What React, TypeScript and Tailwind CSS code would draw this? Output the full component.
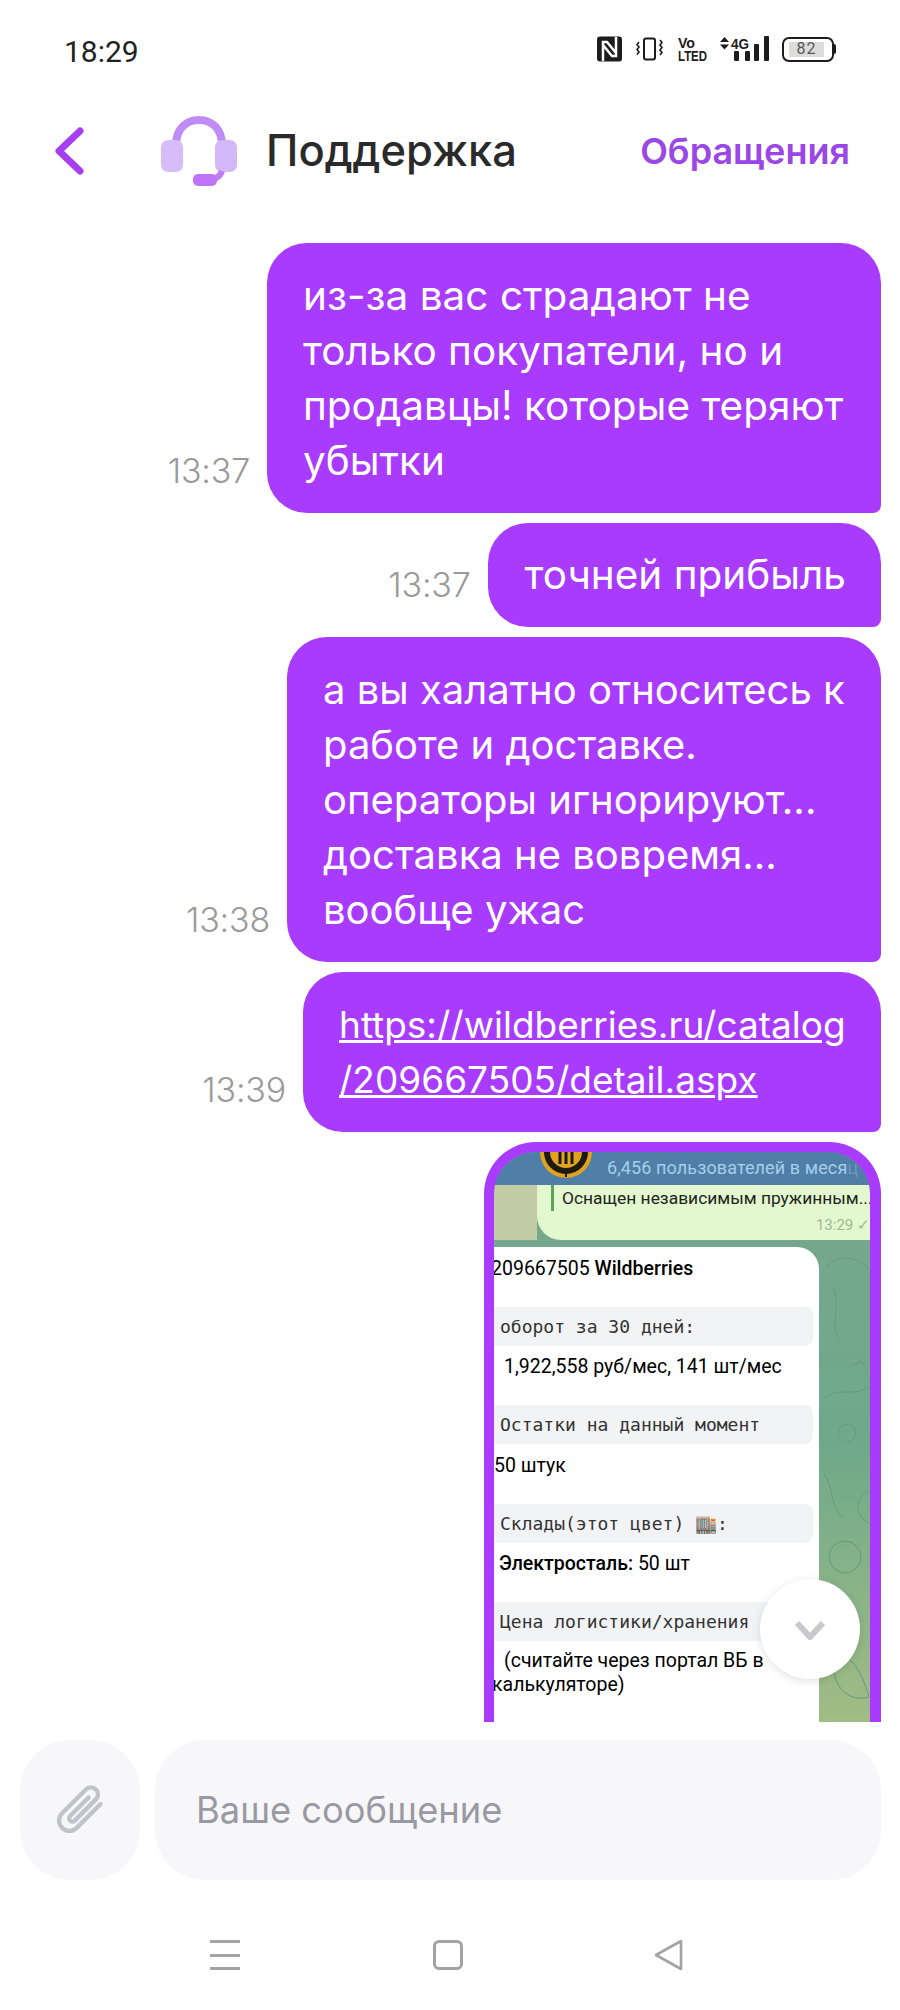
import React from 'react';

const PURPLE = 'bg-[#a83bfd]';

const HeadsetIcon = () => (
  <svg width="78" height="72" viewBox="0 0 78 72" fill="none">
    <path d="M16 30 C16 14 26 5 39 5 C52 5 62 14 62 30" stroke="#bf8cf5" strokeWidth="8" />
    <rect x="1" y="25" width="22" height="32" rx="7" fill="#d6bdf9" />
    <rect x="55" y="25" width="22" height="32" rx="7" fill="#d3b8f9" />
    <path d="M62 56 C60 62 54 65 46 65" stroke="#bf7ef8" strokeWidth="6" />
    <rect x="33" y="59" width="24" height="12" rx="5" fill="#bf74fa" />
  </svg>
);

const StatusIcons = () => (
  <div className="flex items-center">
    {/* nfc */}
    <svg width="25" height="26" viewBox="0 0 25 26">
      <rect width="25" height="25" y="0.5" rx="3" fill="#1c1c1c" />
      <path d="M6 25 V6 H10 L19 17 M19 1 V20 H15 L6 9" stroke="#fff" strokeWidth="2.5" fill="none" />
    </svg>
    {/* vibrate */}
    <svg width="27" height="24" viewBox="0 0 27 24" fill="none" stroke="#1c1c1c" className="ml-[14px]">
      <rect x="8" y="1.5" width="11" height="21" rx="2" strokeWidth="2" />
      <path d="M3 5 l-2 2.5 l2 2.5 l-2 2.5 l2 2.5 l-2 2.5" strokeWidth="1.6" />
      <path d="M24 3 l2 2.5 l-2 2.5 l2 2.5 l-2 2.5 l2 2.5 l-2 2.5" strokeWidth="1.6" />
    </svg>
    <svg width="30" height="26" viewBox="0 0 30 26" fill="#1c1c1c" className="ml-[15px] overflow-visible" fontFamily="Liberation Sans, sans-serif" fontWeight="700" fontSize="15">
      <text x="0" y="12" textLength="17" lengthAdjust="spacingAndGlyphs">Vo</text>
      <text x="0" y="25" textLength="29" lengthAdjust="spacingAndGlyphs">LTED</text>
    </svg>
    {/* 4g + signal */}
    <svg width="52" height="26" viewBox="0 0 52 26" className="ml-[11px] overflow-visible" fill="#1c1c1c">
      <path d="M1 6 L5.5 1 L10 6 Z M1 8.5 L10 8.5 L5.5 13.5 Z" />
      <text x="12" y="13" fontSize="14.5" fontWeight="700" fontFamily="Liberation Sans, sans-serif" textLength="18" lengthAdjust="spacingAndGlyphs">4G</text>
      <rect x="15" y="15" width="5" height="10" rx="1" />
      <rect x="26" y="15" width="5" height="10" rx="1" />
      <rect x="35" y="8" width="5" height="17" rx="1" />
      <rect x="45" y="0" width="5" height="25" rx="1" />
    </svg>
    <div className="ml-[11px] flex items-center">
      <div className="w-[52px] h-[25px] border-2 border-[#1c1c1c] rounded-[7px] flex items-center p-[3px]">
        <div className="w-[35px] h-[15px] ml-[2px] bg-[#dcdcdc] flex items-center justify-center text-[16px] text-[#555] font-['Roboto',sans-serif] tracking-[1px]">
          82
        </div>
      </div>
      <div className="w-[2px] h-[10px] bg-[#1c1c1c] rounded-r" />
    </div>
  </div>
);

const Bubble = ({ time, children, className }: { time: string; children: React.ReactNode; className: string }) => (
  <div className="flex justify-end items-end">
    <span className="text-[34px] font-light text-[#9a9a9a] leading-[36px] mr-[17px] mb-[24px] tracking-[-0.2px]">{time}</span>
    <div className={`${PURPLE} text-white rounded-[40px] rounded-br-[8px] leading-[55px] pr-[35px] whitespace-nowrap ${className}`}>
      {children}
    </div>
  </div>
);

const GrayRow = ({ children }: { children: React.ReactNode }) => (
  <div className="h-[39px] w-[319px] bg-[#f2f3f5] rounded-r-[8px] pl-[6px] flex items-center text-[18px] text-[#333] font-['DejaVu_Sans_Mono',monospace] whitespace-nowrap">
    {children}
  </div>
);

const Doodles = () => (
  <svg width="51" height="480" viewBox="0 0 51 480" fill="none" stroke="#659a7e" strokeWidth="1" className="absolute left-[325px] top-[95px]">
    <path d="M8 20 C20 6 40 10 50 22 M14 40 C24 60 8 80 22 96 M30 120 l12 -6 l6 10 M6 150 C20 140 36 150 50 140" />
    <circle cx="28" cy="186" r="9" />
    <path d="M4 226 C16 240 10 262 24 270 M50 244 C36 250 34 268 50 276" />
    <circle cx="26" cy="310" r="16" />
    <path d="M0 372 C18 358 34 372 30 392 M14 410 C34 404 44 430 50 450 M14 410 C12 440 30 456 50 450" />
  </svg>
);

const TelegramShot = () => (
  <div className="relative w-[376px] h-[580px] overflow-hidden rounded-t-[42px] bg-gradient-to-b from-[#78a68e] via-[#6ea98a] to-[#a3bd85] font-['Roboto',sans-serif] text-black">
    <Doodles />
    <div className="h-[33px] bg-[#4f7fa6] relative text-[18px] text-[#a6cdec] pl-[113px] pt-[1px] whitespace-nowrap overflow-hidden leading-[30px] tracking-[0.1px]">
      <svg width="54" height="28" viewBox="0 0 54 28" className="absolute left-[45px] top-0" fill="none">
        <circle cx="27" cy="0" r="26" fill="#e0a21f" />
        <circle cx="27" cy="0" r="19" stroke="#1d1a10" strokeWidth="6" />
        <path d="M21 0 V12 M27 0 V12 M33 0 V12" stroke="#1d1a10" strokeWidth="3" />
        <path d="M27 17 V25" stroke="#1d1a10" strokeWidth="2" />
      </svg>
      6,456 пользователей в меся<span className="opacity-30">ц</span>
    </div>
    <div className="h-[55px] relative">
      <div className="absolute inset-0 w-[43px] bg-[#c3cba5]" />
      <div className="absolute left-[43px] top-0 w-[333px] h-[55px] bg-[#e3f8cf] rounded-bl-[24px]">
        <div className="absolute left-[14px] top-0 w-[3px] h-[26px] bg-[#5fa15c]" />
        <div className="absolute left-[25px] top-[1px] text-[17.4px] leading-[24px] text-[#222] whitespace-nowrap">Оснащен независимым пружинным...</div>
        <div className="absolute right-[0px] top-[31px] text-[15px] leading-[18px] text-[#9db892]">13:29 ✓</div>
      </div>
    </div>
    <div className="relative mt-[7px] w-[325px] h-[490px] bg-white rounded-tr-[22px] text-[19.5px] leading-[24px] whitespace-nowrap">
      <div className="pt-[10px] h-[60px] -ml-[3px]">
        209667505 <span className="font-medium">Wildberries</span>
      </div>
      <GrayRow>оборот за 30 дней:</GrayRow>
      <div className="pl-[10px] h-[59px] pt-[9px]">1,922,558 руб/мес, 141 шт/мес</div>
      <GrayRow>Остатки на данный момент</GrayRow>
      <div className="h-[60px] pt-[10px]">50 штук</div>
      <GrayRow>Склады(этот цвет) 🏬:</GrayRow>
      <div className="pl-[5px] h-[59px] pt-[9px]">
        <span className="font-medium">Электросталь:</span> 50 шт
      </div>
      <GrayRow>Цена логистики/хранения</GrayRow>
      <div className="pl-[10px] pt-[8px]">(считайте через портал ВБ в</div>
      <div className="-ml-[2px]">калькуляторе)</div>
    </div>
  </div>
);

const App = () => {
  return (
    <div className="w-[900px] h-[2010px] bg-white flex flex-col overflow-hidden font-['Inter',sans-serif]">
      {/* status bar */}
      <div className="h-[104px] flex items-start justify-between pl-[64px] pr-[64px] pt-[36px]">
        <span className="text-[30px] leading-[32px] font-['Roboto',sans-serif] text-[#222]">18:29</span>
        <StatusIcons />
      </div>

      {/* header */}
      <div className="h-[94px] flex items-center pl-[53px] pr-[50px]">
        <svg width="32" height="48" viewBox="0 0 32 48" fill="none">
          <path d="M27 4 L6 24 L27 44" stroke="#a63ff2" strokeWidth="7" strokeLinecap="round" strokeLinejoin="round" />
        </svg>
        <div className="ml-[75px]">
          <HeadsetIcon />
        </div>
        <span className="ml-[28px] text-[43.5px] font-medium text-[#2a2a2a] leading-none">Поддержка</span>
        <span className="ml-auto text-[36px] font-semibold text-[#9a47e6] leading-none">Обращения</span>
      </div>

      {/* messages */}
      <div className="h-[1479px] mt-[45px] pr-[19px] flex flex-col gap-[10px] overflow-hidden shrink-0">
        <Bubble time="13:37" className="w-[614px] pt-[25px] pb-[25px] pl-[36px] text-[40.5px]">
          из-за вас страдают не<br />только покупатели, но и<br />продавцы! которые теряют<br />убытки
        </Bubble>
        <Bubble time="13:37" className="pt-[24px] pb-[25px] pl-[37px] text-[40.5px]">
          точней прибыль
        </Bubble>
        <Bubble time="13:38" className="w-[594px] pt-[25px] pb-[25px] pl-[36px] text-[40px]">
          а вы халатно относитесь к<br />работе и доставке.<br />операторы игнорируют...<br />доставка не вовремя...<br />вообще ужас
        </Bubble>
        <Bubble time="13:39" className="w-[578px] pt-[25px] pb-[25px] pl-[36px] text-[37px]">
          <span className="underline">https://wildberries.ru/catalog</span><br />
          <span className="underline">/209667505/detail.aspx</span>
        </Bubble>
        <div className="flex justify-end">
          <div className={`${PURPLE} w-[397px] h-[590px] shrink-0 rounded-t-[52px] pt-[10px] px-[10px] pb-0 overflow-hidden`}>
            <TelegramShot />
          </div>
        </div>
      </div>

      {/* composer */}
      <div className="relative mt-[18px] h-[140px] pl-[20px] pr-[19px] flex gap-[15px] shrink-0">
        <div className="absolute right-[40px] -top-[161px] w-[100px] h-[100px] rounded-full bg-white shadow-[0_2px_10px_rgba(0,0,0,0.12)] flex items-center justify-center">
          <svg width="32" height="22" viewBox="0 0 32 22" fill="none">
            <path d="M3 5 L16 19 L29 5" stroke="#c8c8ce" strokeWidth="6" />
          </svg>
        </div>
        <div className="w-[120px] h-[140px] rounded-[50px] bg-[#f7f7fa] flex items-center justify-center">
          <svg width="60" height="60" viewBox="-15 0 64 64" fill="none" stroke="#c2c2cb" strokeWidth="4.6" strokeLinecap="round">
            <g transform="rotate(45 17 32)">
              <path d="M28 12 V48 a11 11 0 0 1 -22 0 V12 a7.5 7.5 0 0 1 15 0 V44 a3.5 3.5 0 0 1 -7 0 V16" />
            </g>
          </svg>
        </div>
        <div className="flex-1 h-[140px] rounded-[50px] bg-[#f7f7fa] pl-[41px] flex items-center text-[36.3px] text-[#9999a3]">
          Ваше сообщение
        </div>
      </div>

      {/* nav bar */}
      <div className="flex-1 relative flex items-start">
        <div className="mt-[60px] ml-[210px] w-[30px] h-[30px] flex flex-col justify-between">
          <div className="h-[3px] bg-[#a3a3a3]" />
          <div className="h-[3px] bg-[#a3a3a3]" />
          <div className="h-[3px] bg-[#a3a3a3]" />
        </div>
        <div className="mt-[60px] ml-[193px] w-[30px] h-[30px] border-[3px] border-[#a3a3a3] rounded-[6px]" />
        <svg width="32" height="32" viewBox="0 0 32 32" fill="none" className="mt-[59px] ml-[190px]">
          <path d="M28 2 V30 L3 16 Z" stroke="#a3a3a3" strokeWidth="2.6" strokeLinejoin="round" />
        </svg>
      </div>
    </div>
  );
};

export default App;
